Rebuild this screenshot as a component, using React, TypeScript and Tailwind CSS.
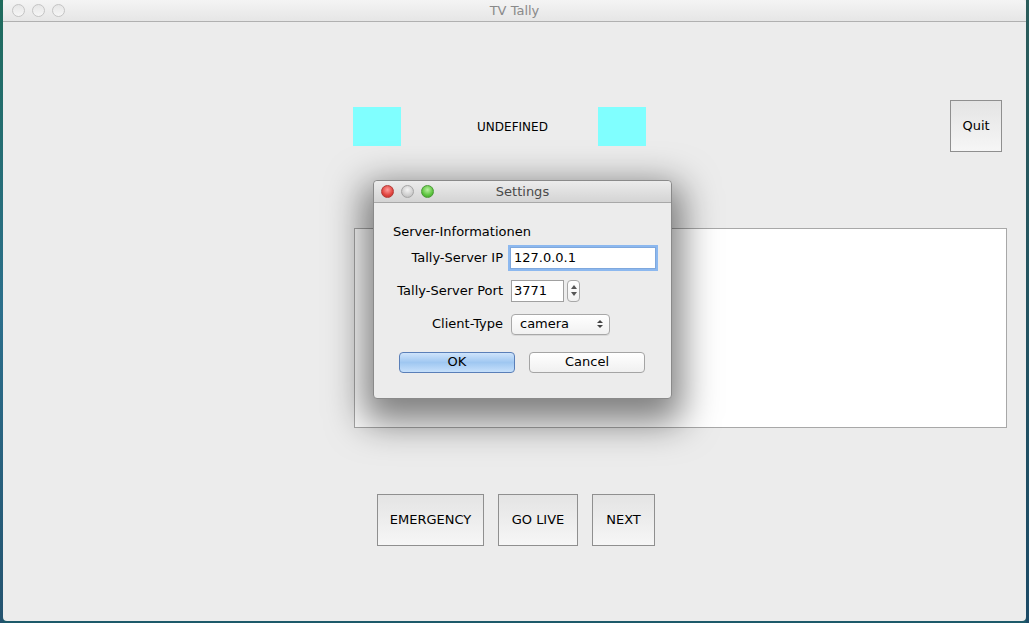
import React from "react";

const font = { fontFamily: '"Lucida Grande", "DejaVu Sans", "Liberation Sans", sans-serif' };

function Light({ color }: { color?: "red" | "gray" | "green" | "empty" }) {
  if (color === "empty") {
    return <div className="w-[13px] h-[13px] rounded-full border border-[#c4c4c4] bg-gradient-to-b from-[#e6e6e6] to-[#f6f6f6]" />;
  }
  const cls =
    color === "red"
      ? "bg-[radial-gradient(circle_at_50%_35%,#ff9a9a,#e0443e_60%,#b8302c)] border-[#b43a36]"
      : color === "green"
      ? "bg-[radial-gradient(circle_at_50%_35%,#b8f0a0,#5cc43e_60%,#3c9a2a)] border-[#4a9a36]"
      : "bg-[radial-gradient(circle_at_50%_35%,#f4f4f4,#cfcfcf_60%,#b5b5b5)] border-[#a5a5a5]";
  return <div className={`w-[13px] h-[13px] rounded-full border ${cls}`} />;
}

function BigButton({ label, w }: { label: string; w: string }) {
  return (
    <div
      className={`${w} h-[52px] border border-[#8f8f8f] bg-gradient-to-b from-[#e4e4e4] to-[#f6f6f6] flex items-center justify-center text-[13px] text-black`}
    >
      {label}
    </div>
  );
}

export default function App() {
  return (
    <div className="w-[1029px] h-[623px] bg-[#1d5a6a] flex overflow-hidden relative" style={font}>
      {/* desktop edges */}
      <div className="w-[3px] h-full bg-gradient-to-b from-[#1f6b5c] via-[#2c6f8c] to-[#24536f]" />
      <div className="w-[1023px] h-[621px] bg-[#ececec] flex flex-col relative rounded-b-[4px]">
        {/* title bar */}
        <div className="h-[22px] bg-gradient-to-b from-[#f4f4f4] to-[#e6e6e6] border-b border-[#b0b0b0] flex items-center relative rounded-t-[4px]">
          <div className="flex gap-[7px] ml-[9px]">
            <Light color="empty" />
            <Light color="empty" />
            <Light color="empty" />
          </div>
          <div className="absolute inset-0 flex items-center justify-center text-[13px] text-[#8a8a8a]">TV Tally</div>
        </div>

        {/* content */}
        <div className="flex flex-col pt-[78px]">
          <div className="flex items-center">
            <div className="ml-[350px] w-[48px] h-[39px] bg-[#80ffff]" />
            <div className="w-[197px] text-center text-[12px] text-black pl-[26px] pt-[1px]">UNDEFINED</div>
            <div className="w-[48px] h-[39px] bg-[#80ffff]" />
            <div className="flex-1" />
            <BigButton label="Quit" w="w-[52px]" />
            <div className="w-[24px]" />
          </div>

          <div className="ml-[351px] mr-[19px] mt-[76px] h-[200px] bg-white border border-[#a8a8a8]" />

          <div className="flex ml-[374px] mt-[66px] gap-[14px]">
            <BigButton label="EMERGENCY" w="w-[107px]" />
            <BigButton label="GO LIVE" w="w-[80px]" />
            <BigButton label="NEXT" w="w-[63px]" />
          </div>
        </div>

        {/* Settings dialog */}
        <div className="absolute left-[370px] top-[180px] w-[299px] h-[219px] bg-[#ececec] border border-[#8a8a8a] rounded-[4px] shadow-[0_14px_36px_10px_rgba(0,0,0,0.5)] flex flex-col">
          <div className="h-[22px] bg-gradient-to-b from-[#ececec] to-[#d4d4d4] border-b border-[#a8a8a8] rounded-t-[4px] flex items-center relative">
            <div className="flex gap-[7px] ml-[7px]">
              <Light color="red" />
              <Light color="gray" />
              <Light color="green" />
            </div>
            <div className="absolute inset-0 flex items-center justify-center text-[13px] text-[#4a4a4a]">Settings</div>
          </div>
          <div className="flex flex-col text-[13px] text-black">
            <div className="ml-[19px] mt-[19px]">Server-Informationen</div>
            <div className="flex items-center mt-[5px]">
              <div className="w-[129px] text-right">Tally-Server IP</div>
              <div className="ml-[7px] w-[146px] h-[22px] bg-white border border-[#7fa8dd] ring-2 ring-[#8cb8ef] ring-offset-0 flex items-center pl-[3px]">127.0.0.1</div>
            </div>
            <div className="flex items-center mt-[11px]">
              <div className="w-[129px] text-right">Tally-Server Port</div>
              <div className="ml-[8px] w-[53px] h-[22px] bg-white border border-[#a0a0a0] flex items-center pl-[2px]">3771</div>
              <div className="ml-[3px] w-[13px] h-[22px] rounded-[4px] border border-[#a8a8a8] bg-gradient-to-b from-[#ffffff] to-[#f0f0f0] flex flex-col items-center justify-center gap-[3px]">
                <div className="w-0 h-0 border-l-[3px] border-r-[3px] border-b-[4px] border-l-transparent border-r-transparent border-b-[#555]" />
                <div className="w-0 h-0 border-l-[3px] border-r-[3px] border-t-[4px] border-l-transparent border-r-transparent border-t-[#555]" />
              </div>
            </div>
            <div className="flex items-center mt-[12px]">
              <div className="w-[129px] text-right">Client-Type</div>
              <div className="ml-[8px] w-[99px] h-[21px] rounded-[4px] border border-[#a8a8a8] bg-gradient-to-b from-[#ffffff] to-[#f1f1f1] flex items-center pl-[8px] pr-[6px] shadow-[0_1px_0_rgba(0,0,0,0.08)]">
                <span className="flex-1">camera</span>
                <div className="flex flex-col gap-[2px]">
                  <div className="w-0 h-0 border-l-[3px] border-r-[3px] border-b-[3px] border-l-transparent border-r-transparent border-b-[#444]" />
                  <div className="w-0 h-0 border-l-[3px] border-r-[3px] border-t-[3px] border-l-transparent border-r-transparent border-t-[#444]" />
                </div>
              </div>
            </div>
            <div className="flex mt-[17px] ml-[25px] gap-[14px]">
              <div className="w-[116px] h-[21px] rounded-[4px] border border-[#5a7fb8] bg-gradient-to-b from-[#cfe4fb] via-[#9fc7f1] to-[#c6e0fb] flex items-center justify-center">OK</div>
              <div className="w-[116px] h-[21px] rounded-[4px] border border-[#a4a4a4] bg-gradient-to-b from-[#ffffff] to-[#f0f0f0] flex items-center justify-center">Cancel</div>
            </div>
          </div>
        </div>
      </div>
      <div className="w-[3px] h-full bg-gradient-to-b from-[#2a5c5a] to-[#1c4a66]" />
    </div>
  );
}
